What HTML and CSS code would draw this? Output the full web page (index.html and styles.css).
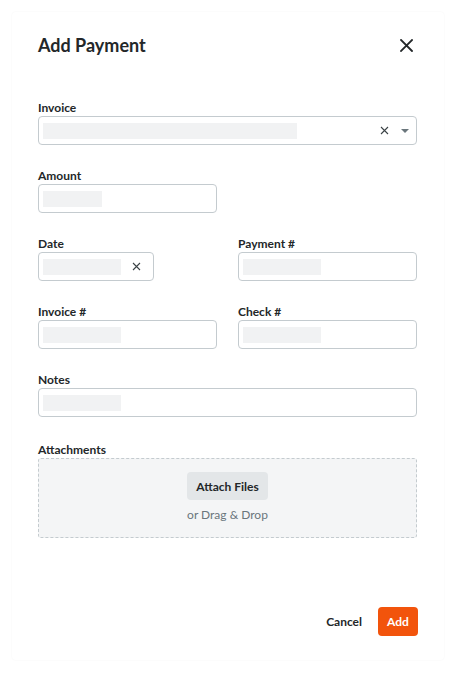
FILE: index.html
```html
<!DOCTYPE html>
<html lang="en">
<head>
    <meta charset="UTF-8">
    <meta name="viewport" content="width=device-width, initial-scale=1.0">
    <title>Add Payment</title>
    <link rel="stylesheet" href="styles.css">
</head>
<body>
    <div class="modal">
        <div class="modal-header">
            <h1>Add Payment</h1>
            <button class="close-btn" aria-label="Close">
                <svg width="13" height="13" viewBox="0 0 13 13">
                    <path d="M1 1 L12 12 M12 1 L1 12" stroke="#232729" stroke-width="1.8" stroke-linecap="square" />
                </svg>
            </button>
        </div>

        <div class="form">
            <div class="field full">
                <label>Invoice</label>
                <div class="input">
                    <span class="skeleton wide"></span>
                    <span class="icons">
                        <svg class="clear" width="9" height="9" viewBox="0 0 9 9">
                            <path d="M1 1 L8 8 M8 1 L1 8" stroke="#3b4246" stroke-width="1.1" />
                        </svg>
                        <svg class="caret" width="8" height="4" viewBox="0 0 8 4">
                            <path d="M0 0 L8 0 L4 4 Z" fill="#6a767c" />
                        </svg>
                    </span>
                </div>
            </div>

            <div class="field">
                <label>Amount</label>
                <div class="input">
                    <span class="skeleton short"></span>
                </div>
            </div>
            <div></div>

            <div class="field">
                <label>Date</label>
                <div class="input date">
                    <span class="skeleton"></span>
                    <span class="icons">
                        <svg class="clear" width="9" height="9" viewBox="0 0 9 9">
                            <path d="M1 1 L8 8 M8 1 L1 8" stroke="#3b4246" stroke-width="1.1" />
                        </svg>
                    </span>
                </div>
            </div>
            <div class="field">
                <label>Payment #</label>
                <div class="input">
                    <span class="skeleton"></span>
                </div>
            </div>

            <div class="field">
                <label>Invoice #</label>
                <div class="input">
                    <span class="skeleton"></span>
                </div>
            </div>
            <div class="field">
                <label>Check #</label>
                <div class="input">
                    <span class="skeleton"></span>
                </div>
            </div>

            <div class="field full">
                <label>Notes</label>
                <div class="input">
                    <span class="skeleton"></span>
                </div>
            </div>

            <div class="field full attachments">
                <label>Attachments</label>
                <div class="dropzone">
                    <button class="attach-btn">Attach Files</button>
                    <span class="drop-text">or Drag &amp; Drop</span>
                </div>
            </div>
        </div>

        <div class="modal-footer">
            <button class="cancel-btn">Cancel</button>
            <button class="add-btn">Add</button>
        </div>
    </div>
</body>
</html>
```

FILE: styles.css
```css
body {
    margin: 0;
    background-color: #fff;
    font-family: 'Lato', 'Noto Sans', sans-serif;
    color: #232729;
}

.modal {
    margin: 12px;
    height: 648px;
    box-sizing: border-box;
    padding: 21px 26px 24px 26px;
    display: flex;
    flex-direction: column;
    border-radius: 4px;
    box-shadow: 0 0 2px rgba(0, 0, 0, 0.05);
}

.modal-header {
    display: flex;
    justify-content: space-between;
    align-items: center;
}

h1 {
    margin: 0;
    font-size: 18px;
    line-height: 22px;
    font-weight: 700;
}

.close-btn {
    width: 24px;
    height: 24px;
    padding: 0;
    border: none;
    background: none;
    display: flex;
    align-items: center;
    justify-content: center;
    cursor: pointer;
}

.form {
    margin-top: 43px;
    display: grid;
    grid-template-columns: 179px 179px;
    column-gap: 21px;
    row-gap: 23px;
}

.field label {
    display: block;
    font-size: 12px;
    line-height: 15px;
    font-weight: 700;
    margin-bottom: 1px;
}

.field.full {
    grid-column: 1 / 3;
}

.attachments {
    margin-top: 2px;
}

.input {
    height: 29px;
    box-sizing: border-box;
    border: 1px solid #c4cbcf;
    border-radius: 4px;
    background-color: #fff;
    padding: 0 4px;
    display: flex;
    align-items: center;
}

.input.date {
    width: 116px;
}

.skeleton {
    display: block;
    width: 78px;
    height: 16px;
    background-color: #f1f2f3;
}

.skeleton.wide {
    width: 254px;
}

.skeleton.short {
    width: 59px;
}

.icons {
    margin-left: auto;
    display: flex;
    align-items: center;
}

.clear {
    margin-right: 12px;
}

.input.date .clear {
    margin-right: 8px;
}

.caret {
    margin-right: 3px;
}

.dropzone {
    height: 80px;
    box-sizing: border-box;
    border: 1px dashed #c4cbcf;
    border-radius: 3px;
    background-color: #f4f5f6;
    padding-top: 13px;
    display: flex;
    flex-direction: column;
    align-items: center;
}

.attach-btn {
    height: 28px;
    padding: 0 9px;
    border: none;
    border-radius: 4px;
    background-color: #e3e6e8;
    font-family: 'Lato', sans-serif;
    font-size: 12px;
    font-weight: 700;
    color: #232729;
    cursor: pointer;
}

.drop-text {
    margin-top: 7px;
    font-size: 12px;
    line-height: 16px;
    color: #6a767c;
}

.modal-footer {
    margin-top: auto;
    display: flex;
    justify-content: flex-end;
    align-items: center;
    gap: 16px;
}

.cancel-btn {
    height: 29px;
    padding: 0;
    border: none;
    background: none;
    font-family: 'Lato', sans-serif;
    font-size: 12px;
    font-weight: 700;
    color: #232729;
    cursor: pointer;
}

.add-btn {
    height: 29px;
    width: 40px;
    padding: 0;
    border: none;
    border-radius: 4px;
    background-color: #f2540c;
    font-family: 'Lato', sans-serif;
    font-size: 12px;
    font-weight: 700;
    color: #fff;
    cursor: pointer;
}
```
